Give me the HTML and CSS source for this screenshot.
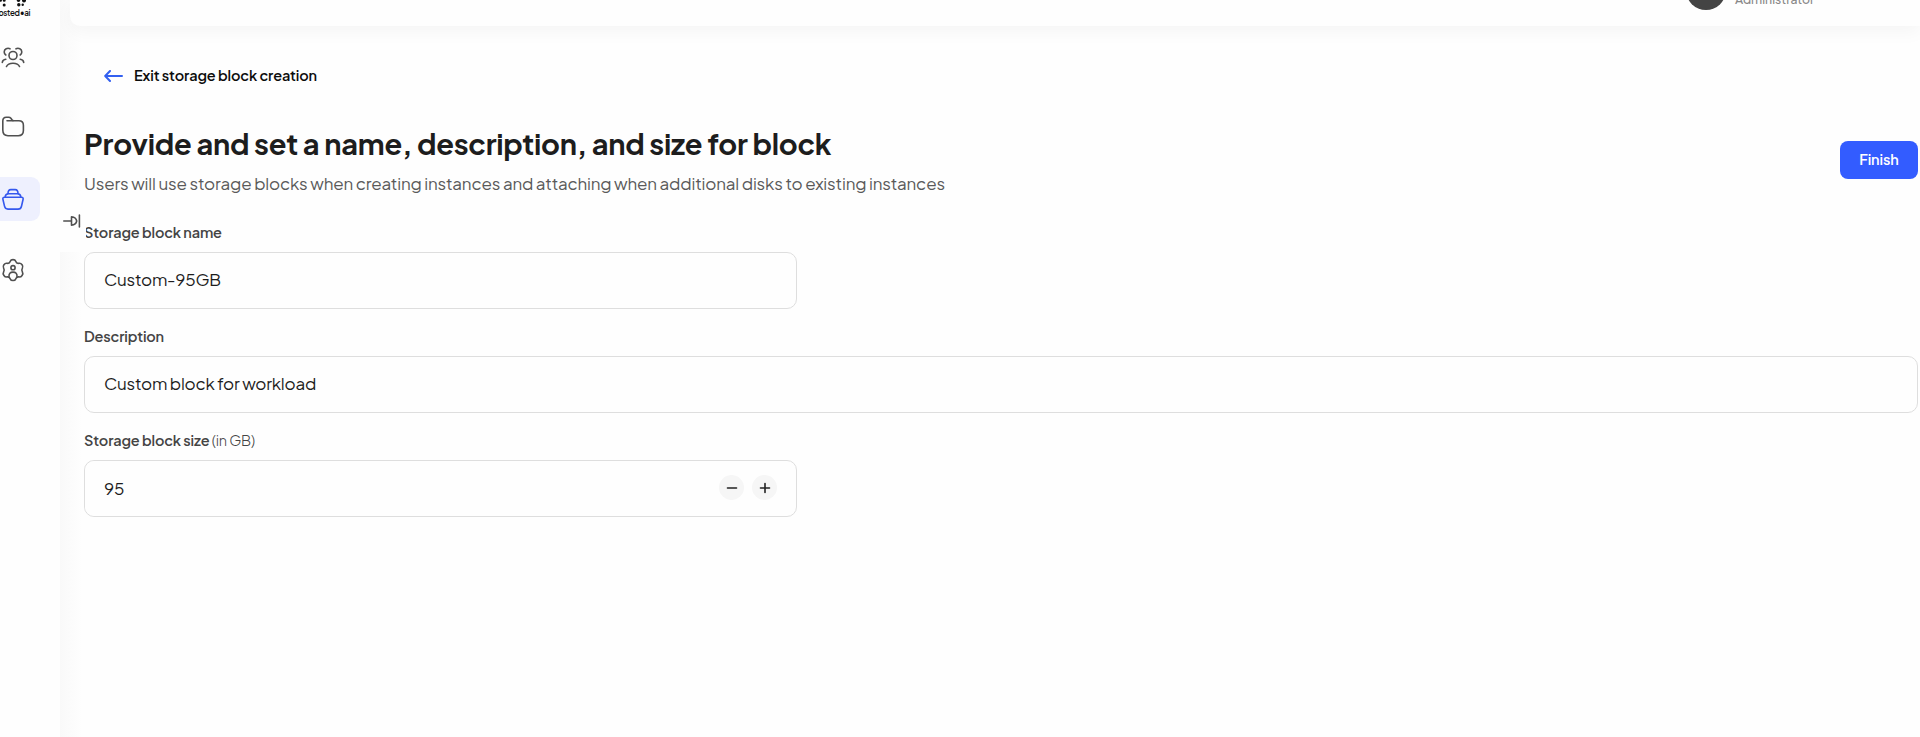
FILE: index.html
```html
<!DOCTYPE html>
<html lang="en">
  <head>
    <meta charset="UTF-8" />
    <meta name="viewport" content="width=device-width, initial-scale=1.0" />
    <title>Create storage block</title>
    <link rel="stylesheet" href="styles.css">
  </head>
  <body>
    <aside class="sidebar">
      <div class="logo">
        <svg class="logo-mark" width="36" height="8" viewBox="0 0 36 8">
          <circle cx="10.5" cy="0.3" r="1.5" />
          <circle cx="14.2" cy="0.3" r="1.5" />
          <circle cx="14.2" cy="5" r="1.5" />
          <circle cx="28.5" cy="0.3" r="1.8" />
          <circle cx="34" cy="0.5" r="2" />
          <circle cx="28.8" cy="4.8" r="1.7" />
          <circle cx="32.7" cy="4.8" r="1.2" />
        </svg>
        <span class="logo-text">hosted•ai</span>
      </div>
      <nav class="menu">
        <a class="menu-item" href="#" aria-label="Users">
          <svg width="24" height="24" viewBox="0 0 24 24">
            <circle cx="12" cy="10.5" r="4" />
            <path d="M5.500 21.500c1-2.300 3.400-3.300 6.500-3.300s5.500 1 6.500 3.300" />
            <path d="M9 3.800c-2.500-1.300-5.800.2-5.800 3.200 0 1.300.6 2.300 1.600 3M15 3.800c2.500-1.300 5.800.2 5.800 3.200 0 1.300-.6 2.300-1.600 3" />
            <path d="M1.300 17.500c.2-2 1.400-3 3.500-3.200M22.700 17.500c-.2-2-1.400-3-3.500-3.200" />
          </svg>
        </a>
        <a class="menu-item" href="#" aria-label="Projects">
          <svg width="24" height="24" viewBox="0 0 24 24">
            <path d="M1.800 14V5c0-2.500 1-3.700 3.500-3.700h2.400c1 0 1.600.3 2.200 1L11.100 4c.4.600.9.800 1.700.8h5c3 0 4.600 1.600 4.600 4.400v5.300c0 3.400-1.700 5.200-5.200 5.200H7c-3.600 0-5.200-2-5.200-5.700z" />
            <path d="M6 4.800h6" />
          </svg>
        </a>
        <a class="menu-item active" href="#" aria-label="Storage">
          <svg width="24" height="24" viewBox="0 0 24 24">
            <path d="M3.600 10.200h16.800c1.300 0 2 .7 1.700 2l-1.600 7c-.4 1.900-1.500 2.900-3.400 2.900H6.900c-1.900 0-3-1-3.400-2.900l-1.600-7c-.3-1.300.4-2 1.700-2z" />
            <path d="M4.200 10c.1-2.200 1.300-3.300 3.300-3.300h9c2 0 3.200 1.100 3.300 3.300" />
            <path d="M7 6.500c0-2.500.9-3.900 2.800-3.900h4.400c1.900 0 2.800 1.400 2.800 3.900" />
          </svg>
        </a>
        <a class="menu-item" href="#" aria-label="Settings">
          <svg width="24" height="24" viewBox="0 0 24 24">
            <path d="M9.300 3.300C10 1.100 14 1.100 14.700 3.300c.5 1.600 1.600 2.300 3.200 2 2.500-.5 4.800 2.800 3.500 4.900-.8 1.300-.8 2.600 0 3.800 1.300 2.100-1 5.400-3.500 4.900-1.600-.3-2.700.4-3.200 2-.7 2.200-4.700 2.200-5.400 0-.5-1.600-1.600-2.300-3.200-2-2.500.5-4.800-2.800-3.500-4.900.8-1.200.8-2.500 0-3.800C1.300 8.100 3.600 4.800 6.100 5.300c1.600.3 2.700-.4 3.200-2z" />
            <circle cx="12" cy="9.700" r="2.100" />
            <path d="M8 18.700c-.3-3 1.300-4.600 4-4.600s4.300 1.600 4 4.600" />
          </svg>
        </a>
      </nav>
      <button class="sidebar-toggle" aria-label="Expand menu">
        <svg width="18" height="14" viewBox="0 0 18 14">
          <path d="M.800 7H8M8.500 2.800v8.400c2.800-.3 4.800-2 5.200-4.200-.4-2.200-2.400-3.900-5.200-4.200zM16.400 1v12" />
        </svg>
      </button>
    </aside>

    <div class="page">
      <header class="topbar">
        <div class="avatar"></div>
        <span class="role">Administrator</span>
      </header>

      <main class="content">
        <a class="back" href="#">
          <svg width="19" height="12" viewBox="0 0 19 12">
            <path d="M18 6H1.500M6 1L1.200 6 6 11" />
          </svg>
          <span>Exit storage block creation</span>
        </a>

        <div class="heading">
          <div>
            <h1>Provide and set a name, description, and size for block</h1>
            <p class="subtitle">Users will use storage blocks when creating instances and attaching when additional disks to existing instances</p>
          </div>
          <button class="finish" type="submit">Finish</button>
        </div>

        <form>
          <div class="field short">
            <label for="name">Storage block name</label>
            <input type="text" id="name" value="Custom-95GB" />
          </div>
          <div class="field">
            <label for="description">Description</label>
            <input type="text" id="description" value="Custom block for workload" />
          </div>
          <div class="field short">
            <label for="size">Storage block size <span>(in GB)</span></label>
            <div class="stepper">
              <input type="text" id="size" value="95" />
              <button type="button" aria-label="Decrease">
                <svg width="12" height="12" viewBox="0 0 12 12"><path d="M1.500 6h9" /></svg>
              </button>
              <button type="button" aria-label="Increase">
                <svg width="12" height="12" viewBox="0 0 12 12"><path d="M1.500 6h9M6 1.500v9" /></svg>
              </button>
            </div>
          </div>
        </form>
      </main>
    </div>
  </body>
</html>
```
FILE: styles.css
```css
* {
  box-sizing: border-box;
}

body {
  display: flex;
  height: 737px;
  margin: 0;
  overflow: hidden;
  background-color: #fefefe;
  font-family: "Plus Jakarta Sans", Inter, sans-serif;
  color: #1d1d1d;
}

svg {
  display: block;
  fill: none;
  stroke: #505050;
  stroke-width: 1.6;
  stroke-linecap: round;
  stroke-linejoin: round;
}

button {
  border: none;
  padding: 0;
  font-family: inherit;
  cursor: pointer;
}

.sidebar {
  position: relative;
  z-index: 2;
  flex: 0 0 60px;
  background-color: #fefefe;
}

.logo {
  height: 35px;
  margin-left: -10px;
}

.logo-mark {
  fill: #111;
  stroke: none;
}

.logo-text {
  display: block;
  width: 50px;
  margin-left: 4px;
  font-size: 8px;
  line-height: 11px;
  font-weight: 600;
  letter-spacing: -0.3px;
  color: #111;
}

.menu {
  display: flex;
  flex-direction: column;
  gap: 27px;
}

.menu-item {
  display: flex;
  align-items: center;
  width: 40px;
  height: 44px;
  padding-left: 1px;
  border-radius: 0 9px 9px 0;
}

.menu-item.active {
  background-color: #eef0fe;
}

.menu-item.active svg {
  stroke: #3558ee;
}

.sidebar-toggle {
  position: absolute;
  top: 190px;
  left: 60px;
  display: flex;
  align-items: center;
  width: 26px;
  height: 62px;
  padding-left: 3px;
  border-radius: 0 8px 8px 0;
  background-color: #fefefe;
}

.page {
  flex: 1;
  min-width: 0;
  background: linear-gradient(90deg, #f9f9f9, #fefefe 22px);
}

.topbar {
  display: flex;
  height: 26px;
  margin-left: 10px;
  padding-left: 1616px;
  border-radius: 0 0 0 10px;
  background-color: #fefefe;
  box-shadow: 0 6px 18px rgba(0, 0, 0, 0.04);
}

.avatar {
  width: 40px;
  height: 40px;
  margin-top: -30px;
  border-radius: 50%;
  background-color: #444;
}

.role {
  margin: -9px 0 0 9px;
  font-size: 12.2px;
  line-height: 16px;
  font-weight: 500;
  color: #888;
}

.content {
  padding: 38px 2px 0 24px;
}

.back {
  display: flex;
  align-items: center;
  gap: 11px;
  height: 24px;
  padding-left: 20px;
  font-size: 14.5px;
  font-weight: 600;
  letter-spacing: -0.13px;
  color: #0c0c0c;
  text-decoration: none;
}

.back span {
  margin-top: -2px;
}

.back svg {
  stroke: #3360f0;
  stroke-width: 2;
}

.heading {
  display: flex;
  justify-content: space-between;
  height: 108px;
  margin-top: 35px;
}

h1 {
  margin: 0;
  font-size: 29px;
  line-height: 40px;
  font-weight: 700;
  letter-spacing: -0.25px;
}

.subtitle {
  margin: 7px 0 0;
  font-size: 17px;
  line-height: 26px;
  letter-spacing: -0.18px;
  color: #5a5a5a;
}

.finish {
  width: 78px;
  height: 38px;
  margin-top: 18px;
  padding-bottom: 2px;
  border-radius: 8px;
  background-color: #335cff;
  color: #fff;
  font-size: 14.5px;
  font-weight: 600;
  letter-spacing: -0.1px;
}

form {
  display: flex;
  flex-direction: column;
  gap: 17px;
  margin-top: -9px;
}

.field.short {
  width: 713px;
}

.field label {
  display: block;
  height: 30px;
  font-size: 14.5px;
  line-height: 21px;
  font-weight: 600;
  letter-spacing: -0.15px;
  color: #444;
  white-space: nowrap;
}

.field label span {
  font-weight: 300;
}

.field input {
  width: 100%;
  height: 57px;
  padding: 0 19px 3px;
  border: 1px solid #dedede;
  border-radius: 10px;
  background-color: #fefefe;
  font-family: inherit;
  font-size: 17px;
  letter-spacing: -0.23px;
  color: #1d1d1d;
}

.stepper {
  display: flex;
  align-items: center;
  gap: 8px;
  height: 57px;
  padding-right: 19px;
  border: 1px solid #dedede;
  border-radius: 10px;
}

.field .stepper input {
  flex: 1;
  height: 55px;
  padding-bottom: 1px;
  border: none;
}

.stepper button {
  display: flex;
  align-items: center;
  justify-content: center;
  width: 25px;
  height: 25px;
  margin-bottom: 2px;
  border-radius: 50%;
  background-color: #f6f6f6;
}

.stepper svg {
  stroke: #222;
}
```
